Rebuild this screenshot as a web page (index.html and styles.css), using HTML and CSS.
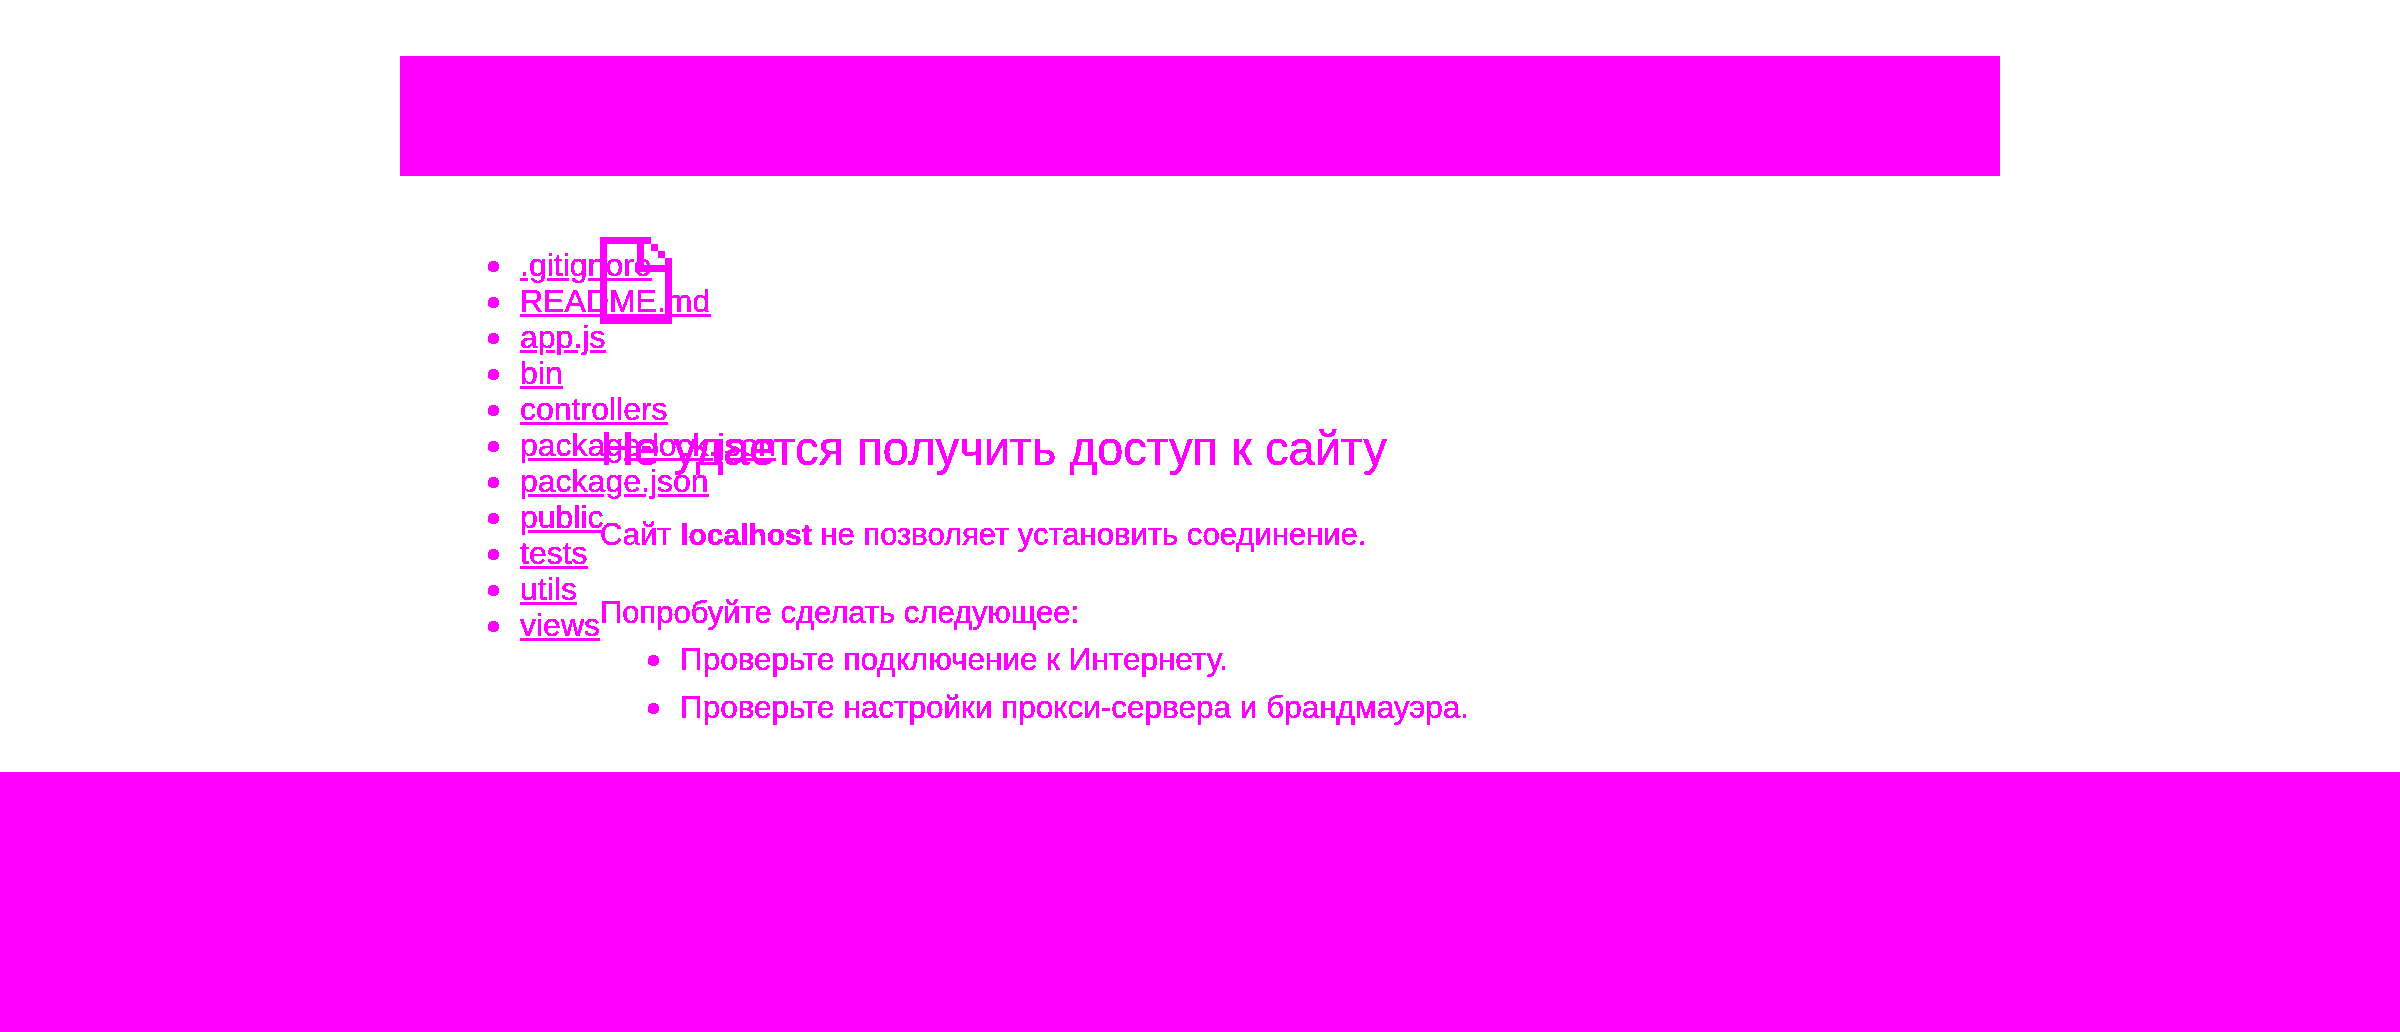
FILE: index.html
```html
<!DOCTYPE html>
<html lang="ru">
<head>
<meta charset="UTF-8">
<meta name="viewport" content="width=device-width, initial-scale=1.0">
<title>localhost</title>
<link rel="stylesheet" href="styles.css">
</head>
<body>
<svg class="defs" width="0" height="0">
    <!-- hard edges on the text, no antialiasing -->
    <filter id="hard" color-interpolation-filters="sRGB" x="0" y="0" width="100%" height="100%">
        <feComponentTransfer>
            <feFuncA type="discrete" tableValues="0 1 1 1 1 1"/>
        </feComponentTransfer>
    </filter>
</svg>
<div class="banner"></div>
<div class="stack">
    <ul class="files">
        <li><a href="#">.gitignore</a></li>
        <li><a href="#">README.md</a></li>
        <li><a href="#">app.js</a></li>
        <li><a href="#">bin</a></li>
        <li><a href="#">controllers</a></li>
        <li><a href="#">package-lock.json</a></li>
        <li><a href="#">package.json</a></li>
        <li><a href="#">public</a></li>
        <li><a href="#">tests</a></li>
        <li><a href="#">utils</a></li>
        <li><a href="#">views</a></li>
    </ul>
    <div class="error">
        <svg class="error-icon" width="72" height="87" viewBox="0 0 72 87" shape-rendering="crispEdges">
            <path fill="#f0f" d="M0 0H51V7H44V28H65V21H72V87H0ZM7 7V80H65V35H37V7ZM51 7H58V14H51ZM58 14H65V21H58Z"/>
        </svg>
        <h1>Не удается получить доступ к сайту</h1>
        <p class="reason">Сайт <b>localhost</b> не позволяет установить соединение.</p>
        <p class="try">Попробуйте сделать следующее:</p>
        <ul class="tips">
            <li>Проверьте подключение к Интернету.</li>
            <li>Проверьте настройки прокси-сервера и брандмауэра.</li>
        </ul>
    </div>
</div>
<div class="band"></div>
</body>
</html>
```

FILE: styles.css
```css
body {
    margin: 0;
    height: 1032px;
    display: flex;
    flex-direction: column;
    overflow: hidden;
    background-color: #fff;
    color: #f0f;
    font-family: "Liberation Sans", Arial, sans-serif;
}
a {
    color: #f0f;
}
ul {
    list-style: none;
}
li::before {
    content: "";
    display: inline-block;
    width: 11px;
    height: 11px;
    margin: 0 21px 0 -32px;
    border-radius: 50%;
    background-color: #f0f;
    vertical-align: 4px;
}
.defs {
    display: block;
    flex: none;
}
.banner {
    width: 1600px;
    height: 120px;
    margin: 56px 0 0 400px;
    background-color: #f0f;
    flex: none;
}
.stack {
    display: grid;
    flex: 1;
    filter: url(#hard);
}
.files,
.error {
    grid-area: 1 / 1;
}
.files {
    margin: 0;
    padding: 71px 0 0 520px;
    font-size: 32px;
    line-height: 36px;
}
.error {
    padding: 61px 0 0 600px;
    font-size: 31px;
}
.error b {
    font-size: 30px;
}
.error-icon {
    display: block;
}
h1 {
    margin: 0;
    padding-top: 99px;
    font-size: 47.2px;
    font-weight: normal;
    line-height: 52px;
}
.reason {
    margin: 42px 0 0;
    line-height: 36px;
}
.try {
    margin: 42px 0 0;
    line-height: 36px;
}
.tips {
    margin: 4px 0 0;
    padding-left: 80px;
    font-size: 31.5px;
}
.tips li {
    line-height: 48px;
}
.band {
    height: 260px;
    flex: none;
    background-color: #f0f;
}
```
